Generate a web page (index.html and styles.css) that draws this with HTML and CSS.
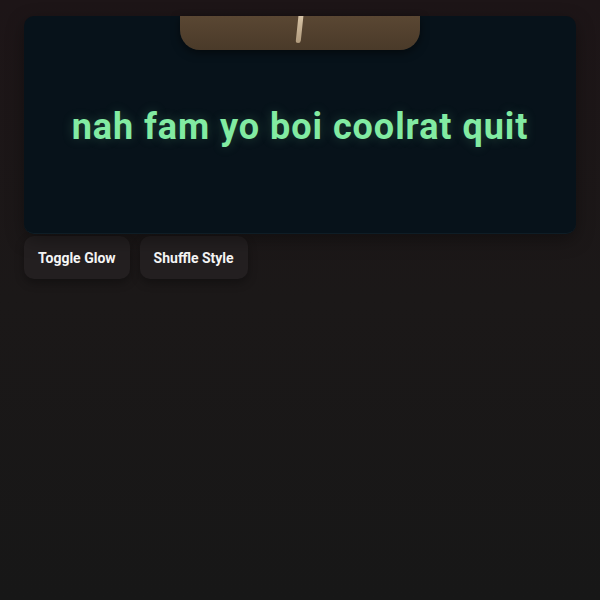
FILE: index.html
```html
<!DOCTYPE html>
<html>
<head>
<meta charset="utf-8">
<link rel="stylesheet" href="styles.css">
</head>
<body>
<main class="page">
  <section class="card">
    <div class="tab"><span class="stick"></span></div>
    <h1 class="msg">nah fam yo boi coolrat quit</h1>
  </section>
  <div class="controls">
    <button class="btn">Toggle Glow</button>
    <button class="btn">Shuffle Style</button>
  </div>
</main>
</body>
</html>
```
FILE: styles.css
```css
html, body {
  margin: 0;
  padding: 0;
  height: 100%;
}
body {
  background: linear-gradient(180deg, #1d1517 0%, #1b1818 50%, #171717 100%);
  font-family: Roboto, "Noto Sans", sans-serif;
}
.page {
  padding: 16px 24px;
}
.card {
  position: relative;
  height: 218px;
  background: #07121a;
  border-radius: 10px;
  border-bottom: 1px solid #0e1d26;
  box-shadow: 0 6px 18px rgba(0,0,0,0.35);
  display: flex;
  align-items: center;
  justify-content: center;
  box-sizing: border-box;
}
.tab {
  position: absolute;
  top: 0;
  left: 156px;
  width: 240px;
  height: 34px;
  border-radius: 0 0 20px 20px;
  background: linear-gradient(180deg, #5a4733 0%, #4a3a29 100%);
  box-shadow: 0 3px 8px rgba(0,0,0,0.5);
}
.stick {
  position: absolute;
  left: 117px;
  top: 0;
  width: 5px;
  height: 27px;
  border-radius: 0 0 3px 3px;
  background: linear-gradient(180deg, #d7c3a6, #b09a7c);
  transform: skewX(-6deg);
}
.msg {
  margin: 0;
  margin-top: 4px;
  font-size: 36px;
  font-weight: 700;
  color: #82eba2;
  letter-spacing: 0.95px;
  text-shadow: 0 0 12px rgba(126, 232, 160, 0.22);
}
.controls {
  display: flex;
  gap: 10px;
  margin-top: 2px;
}
.btn {
  font-family: Roboto, "Noto Sans", sans-serif;
  font-size: 14px;
  font-weight: 700;
  color: #f6f6f6;
  background: #231f20;
  border: none;
  border-radius: 10px;
  height: 43px;
  padding: 0 14px;
  box-shadow: 0 4px 10px rgba(0,0,0,0.3);
}
```
